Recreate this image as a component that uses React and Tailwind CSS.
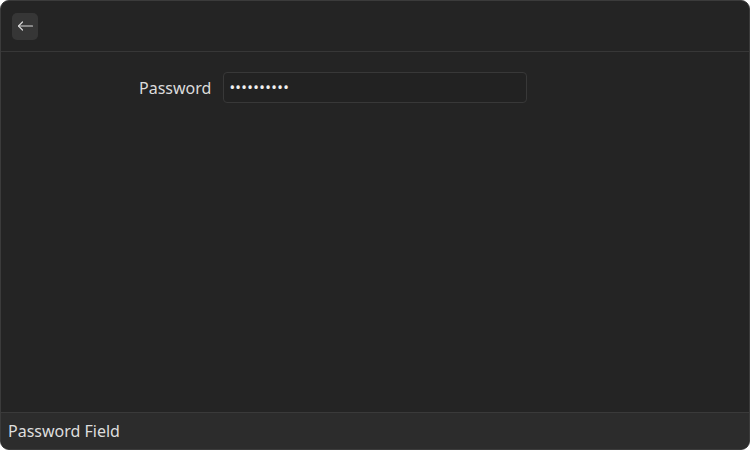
import React from 'react';

export default function App() {
  return (
    <div className="w-[750px] h-[450px] bg-white" style={{ fontFamily: '"Noto Sans", sans-serif' }}>
      <div className="w-full h-full flex flex-col rounded-[9px] overflow-hidden border border-[#3b3b3b] bg-[#242424] text-[#e6e6e6]">
        {/* Header */}
        <header className="h-[51px] flex items-center px-[11px] border-b border-[#373737] flex-shrink-0">
          <button className="w-[26px] h-[27px] rounded-[5px] bg-[#363636] flex items-center justify-center text-[#d8d8d8]">
            <svg width="17" height="16" viewBox="0 0 17 16" fill="none" stroke="currentColor" strokeWidth="1.2" strokeLinecap="round" strokeLinejoin="round">
              <path d="M15.5 8H1.5" />
              <path d="M5.5 4L1.5 8L5.5 12" />
            </svg>
          </button>
        </header>

        {/* Content */}
        <main className="flex-1 pt-[20px]">
          <div className="flex items-center pl-[138px] gap-[12px]">
            <label className="text-[16px] leading-none text-[#dcdcdc]">Password</label>
            <div className="w-[304px] h-[31px] rounded-[4px] border border-[#383838] bg-[#222222] flex items-center px-[5px]">
              <span className="text-[15px] tracking-[0.35px] text-[#f0f0f0]">••••••••••</span>
            </div>
          </div>
        </main>

        {/* Footer */}
        <footer className="h-[37px] flex items-center px-[7px] bg-[#2c2c2c] border-t border-[#3a3a3a] flex-shrink-0">
          <span className="text-[16px] text-[#dedede]">Password Field</span>
        </footer>
      </div>
    </div>
  );
}
